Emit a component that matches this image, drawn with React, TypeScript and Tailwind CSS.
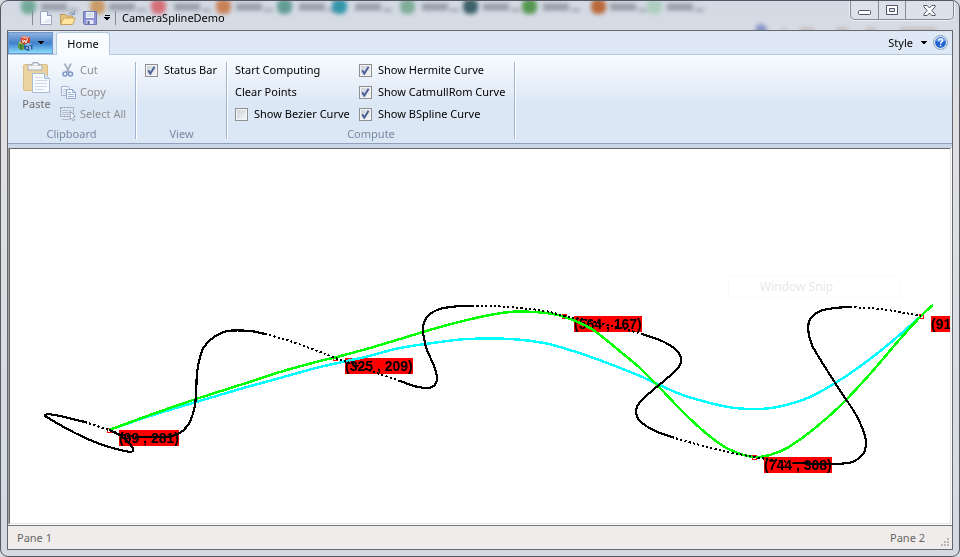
import type { ReactNode } from "react";

type Point = [number, number];

const controlPoints = [
  { x: 99, y: 281, label: "(99 , 281)", width: 60 },
  { x: 325, y: 209, label: "(325 , 209)", width: 68 },
  { x: 554, y: 167, label: "(564 , 167)", width: 68 },
  { x: 744, y: 308, label: "(744 , 308)", width: 68 },
  { x: 911, y: 167, label: "(91", width: 20 },
];

const bsplineCurve: Point[] = [
  [99, 281], [140, 267], [186, 253], [230, 240], [270, 229], [310, 218], [355, 208],
  [390, 199], [430, 193], [458, 190], [500, 190], [534, 194], [563, 202], [592, 212],
  [630, 227], [670, 245], [704, 255], [725, 259], [750, 260], [772, 257], [800, 248],
  [830, 231], [860, 210], [886, 189], [911, 167],
];

const catmullCurve: Point[] = [
  [99, 281], [140, 266], [186, 250], [230, 236], [270, 223], [310, 212], [327, 208],
  [360, 199], [390, 190], [430, 178], [470, 168], [500, 163], [525, 163], [543, 165],
  [558, 169], [580, 179], [595, 190], [612, 204], [630, 219], [650, 239], [670, 260],
  [690, 279], [710, 295], [725, 303], [744, 308], [760, 306], [777, 299], [800, 283],
  [830, 257], [860, 225], [890, 190], [912, 166], [923, 156],
];

const hermiteSolid: Point[][] = [
  [[99, 281], [111, 287], [120, 295], [123, 302], [115, 302], [90, 295], [65, 284], [40, 270], [35, 266], [45, 266], [75, 273]],
  [[125, 288], [155, 288], [168, 285], [178, 276], [184, 261], [186, 246], [187, 224], [190, 208], [194, 198], [204, 188], [218, 182], [240, 182], [255, 185]],
  [[390, 232], [408, 238], [422, 238], [427, 230], [424, 217], [417, 201], [414, 189], [413, 178], [418, 167], [430, 160], [450, 157], [462, 157]],
  [[632, 185], [652, 192], [666, 201], [671, 210], [668, 219], [655, 231], [643, 241], [630, 253], [626, 262], [630, 272], [645, 282], [662, 288]],
  [[785, 314], [810, 315], [825, 315], [842, 313], [853, 305], [856, 294], [853, 281], [845, 264], [831, 243], [815, 218], [802, 196], [798, 179], [801, 169], [810, 162], [825, 159], [840, 158]],
];

const hermiteDotted: Point[][] = [
  [[75, 273], [99, 281], [110, 285], [125, 288]],
  [[255, 185], [280, 192], [310, 203], [325, 209], [337, 213], [364, 223], [390, 232]],
  [[462, 157], [480, 157], [510, 159], [535, 162], [555, 167], [580, 172], [610, 179], [632, 185]],
  [[662, 288], [675, 292], [710, 301], [744, 308], [765, 311], [785, 314]],
  [[840, 158], [870, 160], [895, 164], [911, 167]],
];

function toPath(points: Point[]) {
  let d = `M${points[0][0]} ${points[0][1]}`;
  for (let i = 0; i < points.length - 1; i++) {
    const p0 = points[Math.max(i - 1, 0)];
    const p1 = points[i];
    const p2 = points[i + 1];
    const p3 = points[Math.min(i + 2, points.length - 1)];
    d += `C${p1[0] + (p2[0] - p0[0]) / 6} ${p1[1] + (p2[1] - p0[1]) / 6} ${p2[0] - (p3[0] - p1[0]) / 6} ${p2[1] - (p3[1] - p1[1]) / 6} ${p2[0]} ${p2[1]}`;
  }
  return d;
}

function Check({ id, label, checked = false }: { id: string; label: string; checked?: boolean }) {
  return (
    <label htmlFor={id} className="flex h-[22px] items-center gap-[6px] whitespace-nowrap">
      <span className="relative h-[13px] w-[13px]">
        <input
          id={id}
          type="checkbox"
          defaultChecked={checked}
          className="peer block h-[13px] w-[13px] appearance-none border border-[#8e8f8f] bg-linear-to-br from-[#c9ced6] to-[#f8f8f8] shadow-[inset_0_0_0_1px_#f4f4f4]"
        />
        <svg viewBox="0 0 13 13" className="pointer-events-none absolute inset-0 hidden h-[13px] w-[13px] peer-checked:block">
          <path d="M3.2 6.2 5.3 9.6 9.6 2.8" fill="none" stroke="#4a5f97" strokeWidth="1.9" />
        </svg>
      </span>
      {label}
    </label>
  );
}

function Group({ title, children }: { title: string; children: ReactNode }) {
  return (
    <section className="flex flex-col">
      <div className="flex h-[66px]">{children}</div>
      <h2 className="text-center leading-[18px] text-[#7c8a9e]">{title}</h2>
    </section>
  );
}

function Divider() {
  return <div className="mt-[3px] h-[77px] w-[2px] border-r border-white bg-[#a3b5cd]" />;
}

function NewIcon() {
  return (
    <svg width="12" height="14" viewBox="0 0 12 14">
      <path d="M.5.5h7l4 4v9H.5z" fill="#f7faff" stroke="#97a4ba" />
      <path d="M7.5.5v4h4" fill="#cbd7e9" stroke="#8999b4" />
      <path d="M2 12h8V7z" fill="#dfe8f5" />
    </svg>
  );
}

function OpenIcon() {
  return (
    <svg width="16" height="14" viewBox="0 0 16 14">
      <path d="M.5 13V3.5h5l1 1.500h6V13z" fill="#e8c57a" stroke="#b99a5c" />
      <path d="M.5 13.500 3.500 7H15.500l-3 6.500z" fill="#ffe5a0" stroke="#c5a25d" />
      <path d="M8.500 3Q11 0 14 2.500M14.500 0v3.500H11" fill="none" stroke="#7c98be" />
    </svg>
  );
}

function SaveIcon() {
  return (
    <svg width="14" height="14" viewBox="0 0 14 14">
      <path d="M.5.5h13v13h-12l-1-1z" fill="#8e94d3" stroke="#7179b5" />
      <path d="M3 1h8v6H3z" fill="#eef4fc" />
      <path d="M4 3h6M4 5h6" stroke="#bac8dd" />
      <path d="M3.500 9h7v4h-7z" fill="#e6e9f3" />
      <path d="M4.500 10h2v3h-2z" fill="#555f91" />
    </svg>
  );
}

function AppIcon() {
  return (
    <svg width="15" height="15" viewBox="0 0 15 15">
      <path d="M0 7 3 5l4 1v7l-4 1-3-2z" fill="#5b9a42" />
      <path d="M0 7l3 1 4-2-4-1z" fill="#a2cd75" />
      <path d="M3 8v6" stroke="#356d2a" />
      <path d="m2.500 1.500 4-1.500L12 1.500V7L7.500 9 3 7z" fill="#cf3d26" />
      <path d="m2.500 1.500 4-1.500L12 1.500 8 3z" fill="#f1a18d" />
      <path d="m4.500 3.500.7 3L6.700 4l1 3L9.700 3" fill="none" stroke="#fff" />
      <path d="m6 9 4-2 4.500 1v5L10 15l-4-2z" fill="#235fa5" />
      <path d="m6 9 4-2 4.500 1L10 10z" fill="#8dbce6" />
      <path d="M9 11v2m2-2h2m-2 2h2" stroke="#fff" />
    </svg>
  );
}

function PasteIcon() {
  return (
    <svg width="27" height="31" viewBox="0 0 27 31">
      <rect x=".5" y="2.500" width="24" height="26" rx="1" fill="#ebd3a0" stroke="#d8bd87" />
      <path d="M5 3h14v5H5z" fill="#f4f4f4" stroke="#a8afb8" />
      <path d="M9 4V2q0-1.500 2-1.500h3q2 0 2 1.500v2" fill="#d9dde3" stroke="#9ca5b2" />
      <path d="M11 2.500h3" stroke="#fff" />
      <path d="M9.500 11.500h12l5 5v14h-17z" fill="#f8fbff" stroke="#a8bdd8" />
      <path d="M21.500 11.500v5h5" fill="#d7e3f2" stroke="#a8bdd8" />
      <path d="M12 15.500h7M12 18.500h12M12 21.500h12M12 24.500h12M12 27.500h9" stroke="#cbd8e8" />
    </svg>
  );
}

function CutIcon() {
  return (
    <svg width="16" height="16" viewBox="0 0 16 16" fill="none">
      <path d="m4.500 1.500 4.800 9M11 1.500l-4.500 9" stroke="#a4b1c4" strokeWidth="1.700" />
      <circle cx="5" cy="12" r="2" stroke="#8399c6" strokeWidth="1.600" />
      <circle cx="10.500" cy="12" r="2" stroke="#8399c6" strokeWidth="1.600" />
    </svg>
  );
}

function CopyIcon() {
  return (
    <svg width="16" height="16" viewBox="0 0 16 16">
      <path d="M1.500 2.500h6l2 2v7h-8z" fill="#f5f9ff" stroke="#9eb3d2" />
      <path d="M3 5.500h4M3 7.500h4M3 9.500h4" stroke="#b6c7df" />
      <path d="M6.500 5.500h6l3 3v6h-9z" fill="#f5f9ff" stroke="#8ea6ca" />
      <path d="M12.500 5.500v3h3M8 8.500h3M8 10.500h6M8 12.500h6" fill="none" stroke="#9eb3d2" />
    </svg>
  );
}

function SelectAllIcon() {
  return (
    <svg width="16" height="16" viewBox="0 0 16 16">
      <path d="M.5 1.500h13v9H.5z" fill="none" stroke="#8f98a6" strokeDasharray="2 1" />
      <path d="M2 4.500h9M2 6.500h9M2 8.500h7M2 13.500h7" stroke="#b8c0cc" />
      <path d="m10.500 5.500 5 5-2.500.5 1.500 3-1.500 1-1.500-3-1.500 1.500z" fill="#f7f9fc" stroke="#9aa5b6" />
    </svg>
  );
}

function Arrow() {
  return (
    <svg width="6" height="4" viewBox="0 0 6 4" shapeRendering="crispEdges">
      <path d="M0 0h6L3 4z" fill="#000" />
    </svg>
  );
}

// shapes of the desktop seen through the glass frame
function Glass() {
  const blobs = [
    [20, "#62a089", 40], [89, "#c78e50", 108], [150, "#d55c63", 173], [215, "#c6713c", 235], [276, "#4f9187", 298],
    [331, "#168aa0", 354], [399, "#70a58c", 421], [462, "#234a54", 482], [521, "#3f8b35", 542], [590, "#b5541c", 609],
    [646, "#a6cdb7", 666],
  ] as const;
  return (
    <svg aria-hidden="true" className="pointer-events-none absolute inset-x-0 top-0 h-[29px] w-full">
      <g className="blur-[2px]">
        {blobs.map(([x, color, textX]) => (
          <g key={x}>
            <rect x={x} y="-2" width="15" height="15" rx="6" fill={color} opacity=".85" />
            <path d={`M${textX} 6h26`} stroke="#4d535f" strokeWidth="7" opacity=".45" />
            <path d={`M${textX + 28} 9h9`} stroke="#4d535f" strokeWidth="3" opacity=".4" />
          </g>
        ))}
        <circle cx="760" cy="29" r="6" fill="#6673bb" opacity=".7" />
        <path d="M781 29h4m14 0h14m22 0h12m18 0h10m24 0h36" stroke="#a68f89" strokeWidth="4" opacity=".5" />
      </g>
    </svg>
  );
}

function TitleBar() {
  return (
    <header className="flex h-[29px] items-start justify-between">
      <div className="relative flex h-[29px] items-center pt-[5px] pl-[31px]">
        <i className="h-[14px] w-px bg-[#858c98]" />
        <button aria-label="New" className="ml-[7px]"><NewIcon /></button>
        <button aria-label="Open" className="ml-[8px]"><OpenIcon /></button>
        <button aria-label="Save" className="ml-[7px]"><SaveIcon /></button>
        <button aria-label="Customize toolbar" className="ml-[7px] flex flex-col items-center gap-px">
          <i className="h-px w-[5px] bg-black" />
          <Arrow />
        </button>
        <i className="ml-[5px] h-[14px] w-px bg-[#858c98]" />
        <h1 className="ml-[6px]">CameraSplineDemo</h1>
      </div>
      <div className="relative mr-[5px] flex h-[19px] divide-x divide-[#858b96] rounded-b-[5px] border border-t-0 border-[#858b96] bg-white/20 shadow-[0_0_0_1px_#eef2f8]">
        <button aria-label="Minimize" className="flex w-[28px] items-center justify-center">
          <svg width="13" height="11" viewBox="0 0 13 11"><rect x=".5" y="5.500" width="12" height="4" rx="1" fill="#fff" stroke="#515566" /></svg>
        </button>
        <button aria-label="Maximize" className="flex w-[27px] items-center justify-center">
          <svg width="12" height="10" viewBox="0 0 12 10" fill="none" stroke="#515566"><path d="M.5.5h11v9H.5z" fill="#fff" /><path d="M3.500 3.500h5v3h-5z" fill="#dce3ed" /></svg>
        </button>
        <button aria-label="Close" className="flex w-[47px] items-center justify-center">
          <svg width="13" height="11" viewBox="0 0 13 11"><path d="M.8.500h3.400l2.300 2.500L8.800.500h3.400v1.200L8.800 5.500l3.400 3.800v1.200H8.800L6.500 8l-2.300 2.500H.8V9.300l3.400-3.800L.8 1.700z" fill="#fff" stroke="#515566" /></svg>
        </button>
      </div>
    </header>
  );
}

function Ribbon() {
  return (
    <div className="border-b border-[#8fa2bc]">
      <nav className="flex h-[24px] items-stretch justify-between border-b border-[#b3c7df] bg-[#dfe9f5]">
        <div className="flex pt-px">
          <button aria-label="Application menu" className="flex w-[45px] items-center justify-center gap-[5px] border border-[#6d97cc] bg-linear-to-b from-[#8fb2dd] via-[#3f80cb] to-[#8ddcff]">
            <AppIcon />
            <Arrow />
          </button>
          <button className="-mb-px ml-[3px] h-[23px] w-[54px] rounded-t-[3px] border border-b-0 border-[#b3c7df] bg-[#f8fcff]">Home</button>
        </div>
        <div className="flex items-center pr-[4px]">
          <button className="flex items-center gap-[8px]">Style <Arrow /></button>
          <button aria-label="Help" className="ml-[6px]">
            <svg width="15" height="15" viewBox="0 0 15 15">
              <circle cx="7.500" cy="7.500" r="6.900" fill="#e9f1fb" stroke="#8099bd" />
              <circle cx="7.500" cy="7.500" r="5.400" fill="#2362d1" />
              <path d="M3 6a4.700 4.700 0 0 1 9 0q-4 2-9 0" fill="#6da1ef" />
              <path d="M5.600 5.800q0-1.900 2-1.900 1.900 0 1.900 1.600c0 1.400-1.900 1.500-1.900 3.200m0 1v1.500" fill="none" stroke="#fff" strokeWidth="1.400" />
            </svg>
          </button>
        </div>
      </nav>
      <div className="flex h-[88px] bg-linear-to-b from-[#f8fcff] via-[#dce7f5] via-55% to-[#dce7f5] pt-[4px]">
        <Group title="Clipboard">
          <button disabled className="flex w-[52px] flex-col items-center pt-[3px] pl-[5px] text-[#6d6d6d]">
            <PasteIcon />
            <span className="pt-[3px] leading-[16px]">Paste</span>
          </button>
          <div className="flex w-[75px] flex-col items-start text-[#8d8d8d]">
            <button disabled className="flex h-[22px] items-center gap-[4px]"><CutIcon />Cut</button>
            <button disabled className="flex h-[22px] items-center gap-[4px]"><CopyIcon />Copy</button>
            <button disabled className="flex h-[22px] items-center gap-[4px] whitespace-nowrap"><SelectAllIcon />Select All</button>
          </div>
        </Group>
        <Divider />
        <Group title="View">
          <div className="w-[89px] pl-[8px]">
            <Check id="status" label="Status Bar" checked />
          </div>
        </Group>
        <Divider />
        <Group title="Compute">
          <div className="flex w-[131px] flex-col items-start pl-[7px]">
            <button className="h-[22px]">Start Computing</button>
            <button className="h-[22px]">Clear Points</button>
            <Check id="bezier" label="Show Bezier Curve" />
          </div>
          <div className="w-[155px]">
            <Check id="hermite" label="Show Hermite Curve" checked />
            <Check id="catmull" label="Show CatmullRom Curve" checked />
            <Check id="bspline" label="Show BSpline Curve" checked />
          </div>
        </Group>
        <Divider />
      </div>
    </div>
  );
}

function SplineView() {
  return (
    <main className="relative flex flex-1 overflow-hidden border border-t-[#696969] border-r-[#e3e3e3] border-b-[#e3e3e3] border-l-[#696969] bg-white">
      <svg className="absolute inset-0 h-full w-full" fill="none" shapeRendering="crispEdges">
        {controlPoints.map((p) => (
          <g key={p.x}>
            <rect x={p.x + 10} y={p.y} width={p.width} height="16" fill="#f00" />
            <text x={p.x + 10} y={p.y + 13} fill="#000" className="font-['Liberation_Sans',sans-serif] text-[14px] font-bold">{p.label}</text>
            <path d={`M${p.x - 1.5} ${p.y - 1.5}h4v4h-4z`} stroke="#f00" />
          </g>
        ))}
        <path d={toPath(bsplineCurve)} stroke="#0ff" strokeWidth="2.5" />
        <path d={toPath(catmullCurve)} stroke="#0f0" strokeWidth="2.5" />
        {hermiteSolid.map((points, i) => (
          <path key={i} d={toPath(points)} stroke="#000" strokeWidth="2.2" />
        ))}
        {hermiteDotted.map((points, i) => (
          <path key={i} d={toPath(points)} stroke="#000" strokeWidth="2" strokeDasharray="2.2 2.2" />
        ))}
      </svg>
      <div className="absolute top-[127px] left-[718px] h-[22px] w-[173px] rounded-[2px] border border-[#f7f9fc] pl-[31px] text-[12px] leading-[20px] text-[#e9e6e9]">
        Window Snip
      </div>
    </main>
  );
}

export default function App() {
  return (
    <div className="min-h-screen bg-[#d7dade] font-['Noto_Sans',sans-serif] text-[11px] leading-[16px] text-black">
      <div className="relative flex min-h-screen flex-col overflow-hidden rounded-[8px] border border-[#55585e] bg-linear-to-b from-[#d3dae5] via-[#e1e0e1] via-20% to-[#d3dae2]">
        <Glass />
        <TitleBar />
        <div className="relative mx-[6px] mb-[6px] flex flex-1 flex-col border border-[#65686e] bg-[#c9d6e8]">
          <Ribbon />
          <div className="mt-[4px] flex flex-1 border-r border-b border-l border-r-white border-b-white border-l-[#a0a0a0]">
            <SplineView />
          </div>
          <footer className="relative flex h-[24px] items-center justify-between border-t border-[#777] bg-[#f0eceb] pr-[27px] pl-[9px] text-[#666]">
            <span>Pane 1</span>
            <span>Pane 2</span>
            <svg width="9" height="9" viewBox="0 0 9 9" className="absolute right-[2px] bottom-[2px]">
              <path d="M6 0h2v2H6zM3 3h2v2H3zM6 3h2v2H6zM0 6h2v2H0zM3 6h2v2H3zM6 6h2v2H6z" fill="#bbb7b7" />
            </svg>
          </footer>
        </div>
      </div>
    </div>
  );
}
